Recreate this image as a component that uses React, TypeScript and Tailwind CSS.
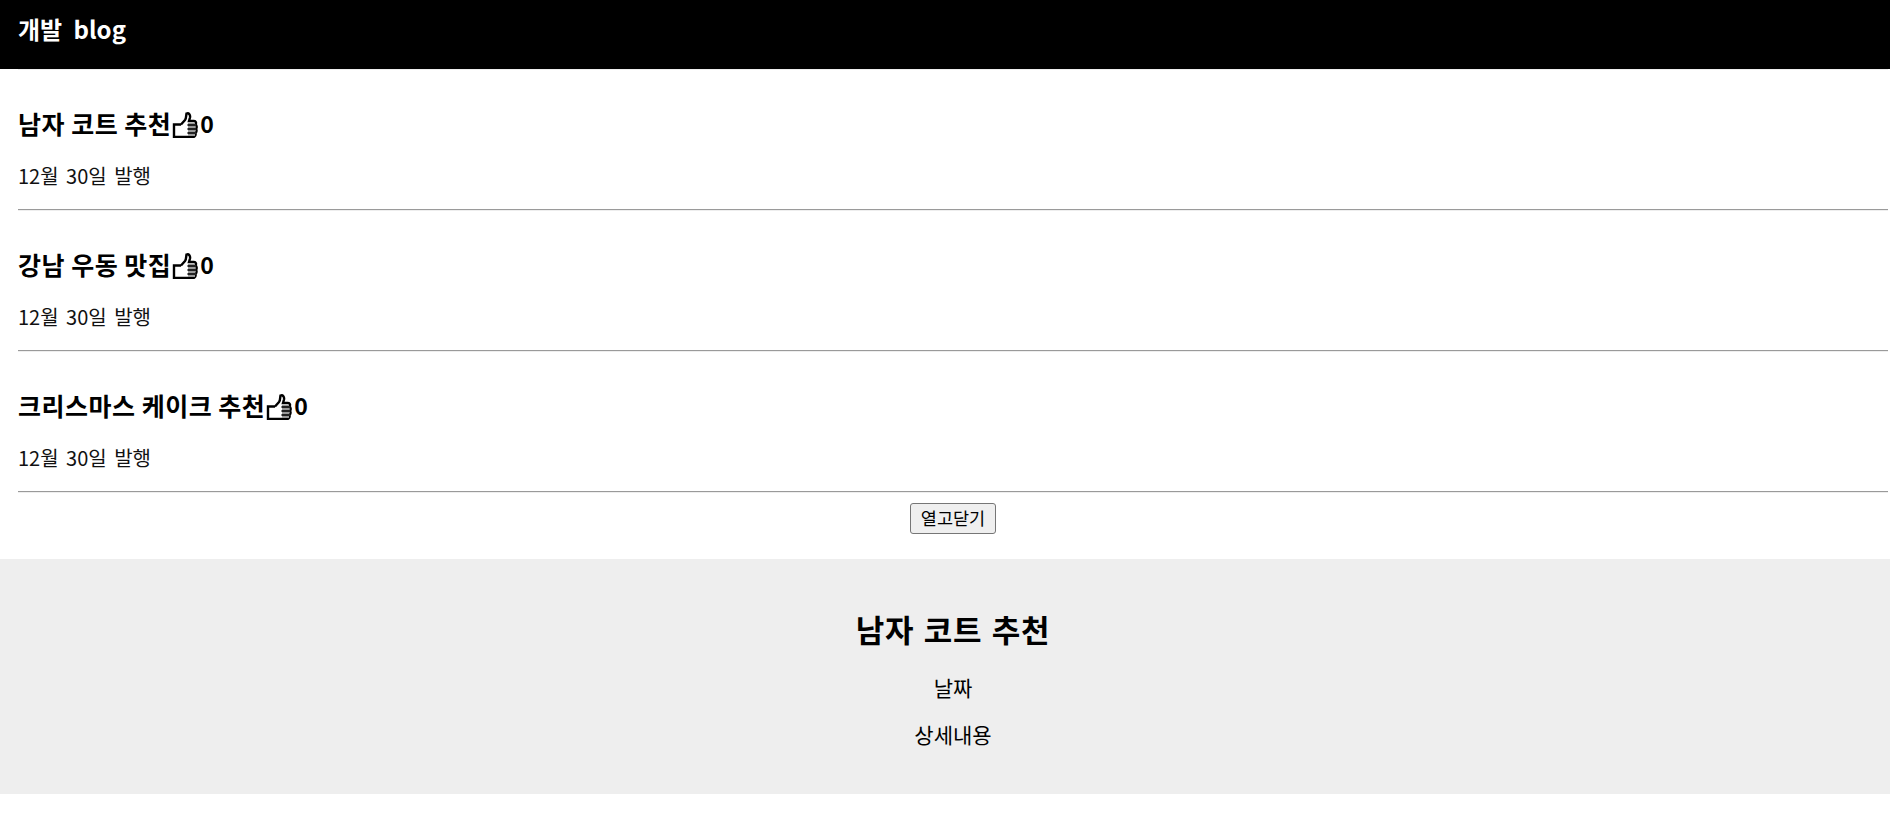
const font = "font-['Malgun_Gothic','Noto_Sans_CJK_KR','Noto_Sans',sans-serif]";

const posts = ["남자 코트 추천", "강남 우동 맛집", "크리스마스 케이크 추천"];

function ThumbsUp() {
  return (
    <svg width="26" height="26" viewBox="0 0 26 26" fill="none" stroke="#000" strokeWidth="2.4" className="mt-[4px] ml-[1px] shrink-0">
      <path d="M9 12.5 L13 8 C14.5 6 14 3.5 14.5 1.5 C17 0.5 18.5 3 18 5.5 L17 9 L22 9 C24 9 24.5 11 23.5 12.5 C25 13.5 25 16 24 17 C25 18 24.5 20 23.5 21 C24 23 23 25 21 25 L2 25 L2 12.5 L9 12.5" />
      <path d="M16 11 L23 11 L23 24 L16 24 Z" fill="#999" stroke="none" />
      <path d="M15.5 13 L24 13 M15.5 17 L24 17 M15.5 21 L24 21" stroke="#222" strokeWidth="1.8" />
    </svg>
  );
}

function Post({ title }: { title: string }) {
  return (
    <div className="mx-[18px] h-[141px] border-t border-b border-t-[#eeeeee] border-b-[#9a9a9a] pt-[35px] text-left first:h-[140px] first:border-t-white last:h-[142px]">
      <h4 className="flex h-[36px] items-center text-[25px] leading-[36px] font-semibold tracking-[0.5px] text-black">
        <span>{title}</span>
        <ThumbsUp />
        <span className="ml-[2px] text-[23px]">0</span>
      </h4>
      <p className="mt-[19.5px] text-[20px] leading-[30px] text-[#111] [word-spacing:3px]">12월 30일 발행</p>
    </div>
  );
}

export default function App() {
  return (
    <div className="overflow-hidden">
      <div className={`${font} min-h-[826px] w-[1906px] bg-white text-center`}>
        <div className="h-[69px] bg-black px-[18px] pt-[11px] text-left text-[24px] leading-[36px] font-semibold text-white [word-spacing:6px]">
          개발 blog
        </div>
        {posts.map((p) => (
          <Post key={p} title={p} />
        ))}
        <hr className="mx-[18px] border-t border-[#eeeeee]" />
        <div className="h-[66px] pt-[10px]">
          <button className="h-[31px] w-[86px] rounded-[3px] border border-[#767676] bg-[#efefef] pb-[2px] text-[17.5px] leading-[20px] text-black">
            열고닫기
          </button>
        </div>
        <div className="h-[235px] bg-[#eeeeee] pt-[48px] text-black">
          <h4 className="text-[31px] leading-[44px] font-semibold tracking-[0.8px] [word-spacing:1.5px]">남자 코트 추천</h4>
          <p className="mt-[22px] text-[21px] leading-[28px]">날짜</p>
          <p className="mt-[19px] text-[21px] leading-[28px]">상세내용</p>
        </div>
      </div>
    </div>
  );
}
